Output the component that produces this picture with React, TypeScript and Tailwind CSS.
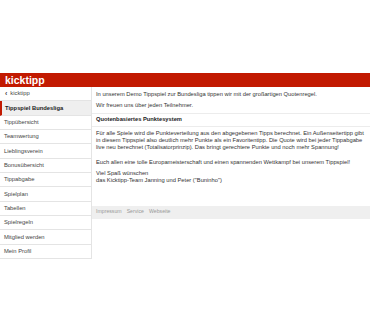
import React from "react";

const items = [
  "Tippübersicht",
  "Teamwertung",
  "Lieblingsverein",
  "Bonusübersicht",
  "Tippabgabe",
  "Spielplan",
  "Tabellen",
  "Spielregeln",
  "Mitglied werden",
  "Mein Profil",
];

export default function App() {
  return (
    <div
      className="w-[370px] h-[333px] bg-white text-[#333] overflow-hidden"
      style={{ fontFamily: '"Liberation Sans", Arial, sans-serif' }}
    >
      <div className="h-[73px]" />
      <div className="h-[14px] bg-[#c21a01] flex items-center pl-[5px]">
        <span className="text-white text-[10.5px] leading-none font-bold">kicktipp</span>
      </div>
      <div className="flex">
        <div className="w-[92px] shrink-0 border-r border-[#e4e4e4] text-[5.8px] text-[#444]">
          <div className="h-[14.33px] border-b border-[#e4e4e4] flex items-center pl-[5px] gap-[3px]">
            <span className="text-[7px] leading-none font-bold">‹</span>
            <span>kicktipp</span>
          </div>
          <div className="h-[14.33px] border-b border-[#e4e4e4] bg-[#efefef] border-l-[2px] border-l-[#c21a01] flex items-center pl-[3px] font-bold text-[#222]">
            Tippspiel Bundesliga
          </div>
          {items.map((it) => (
            <div
              key={it}
              className="h-[14.33px] border-b border-[#e4e4e4] flex items-center pl-[4px]"
            >
              {it}
            </div>
          ))}
        </div>
        <div className="flex-1 flex flex-col min-w-0">
          <div className="pl-[4px] pt-[3.5px] text-[5.75px] leading-[7px] whitespace-nowrap">
            <p>In unserem Demo Tippspiel zur Bundesliga tippen wir mit der großartigen Quotenregel.</p>
            <p className="mt-[4px]">Wir freuen uns über jeden Teilnehmer.</p>
            <div className="mt-[4px] -ml-[4px] pl-[4px] border-t border-b border-[#ececec] py-[2.5px] font-bold text-[#222]">
              Quotenbasiertes Punktesystem
            </div>
            <p className="mt-[3px]">
              Für alle Spiele wird die Punkteverteilung aus den abgegebenen Tipps berechnet. Ein Außenseitertipp gibt
              <br />
              in diesem Tippspiel also deutlich mehr Punkte als ein Favoritentipp. Die Quote wird bei jeder Tippabgabe
              <br />
              live neu berechnet (Totalisatorprinzip). Das bringt gerechtere Punkte und noch mehr Spannung!
            </p>
            <p className="mt-[8px]">Euch allen eine tolle Europameisterschaft und einen spannenden Wettkampf bei unserem Tippspiel!</p>
            <p className="mt-[4px]">
              Viel Spaß wünschen
              <br />
              das Kicktipp-Team Janning und Peter ("Buninho")
            </p>
          </div>
          <div className="mt-[22px] h-[13px] bg-[#efefef] flex items-center pl-[4px] gap-[5px] text-[5.2px] text-[#999]">
            <span>Impressum</span>
            <span>Service</span>
            <span>Webseite</span>
          </div>
        </div>
      </div>
    </div>
  );
}
